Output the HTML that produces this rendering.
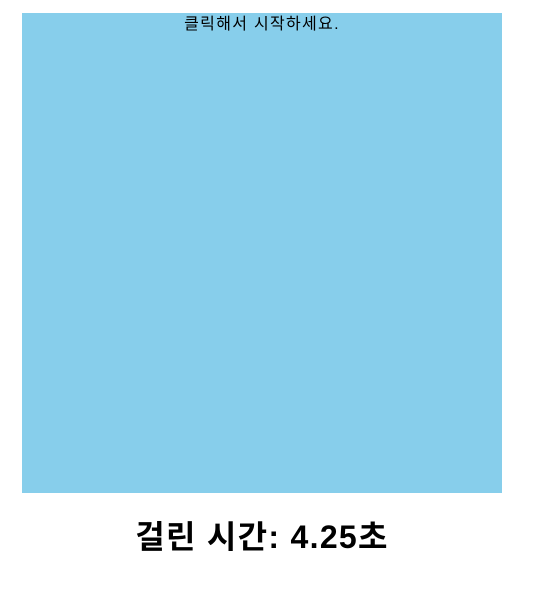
<!DOCTYPE html>
<html><head><meta charset="utf-8"><style>
html,body{margin:0;padding:0;background:#fff;width:545px;height:609px;overflow:hidden;font-family:"Liberation Sans","Noto Sans CJK KR",sans-serif;}
#box{position:absolute;left:22px;top:13px;width:480px;height:480px;background:#87CEEB;}
#msg{position:absolute;left:0;top:2px;width:480px;text-align:center;font-size:16px;line-height:20px;color:#000;letter-spacing:1.3px;}
#t{position:absolute;left:0;top:515px;width:524px;text-align:center;font-size:32px;font-weight:bold;line-height:44px;color:#000;letter-spacing:1.3px;}
</style></head><body>
<div id="box"><div id="msg">클릭해서 시작하세요.</div></div>
<div id="t">걸린 시간: 4.25초</div>
</body></html>
